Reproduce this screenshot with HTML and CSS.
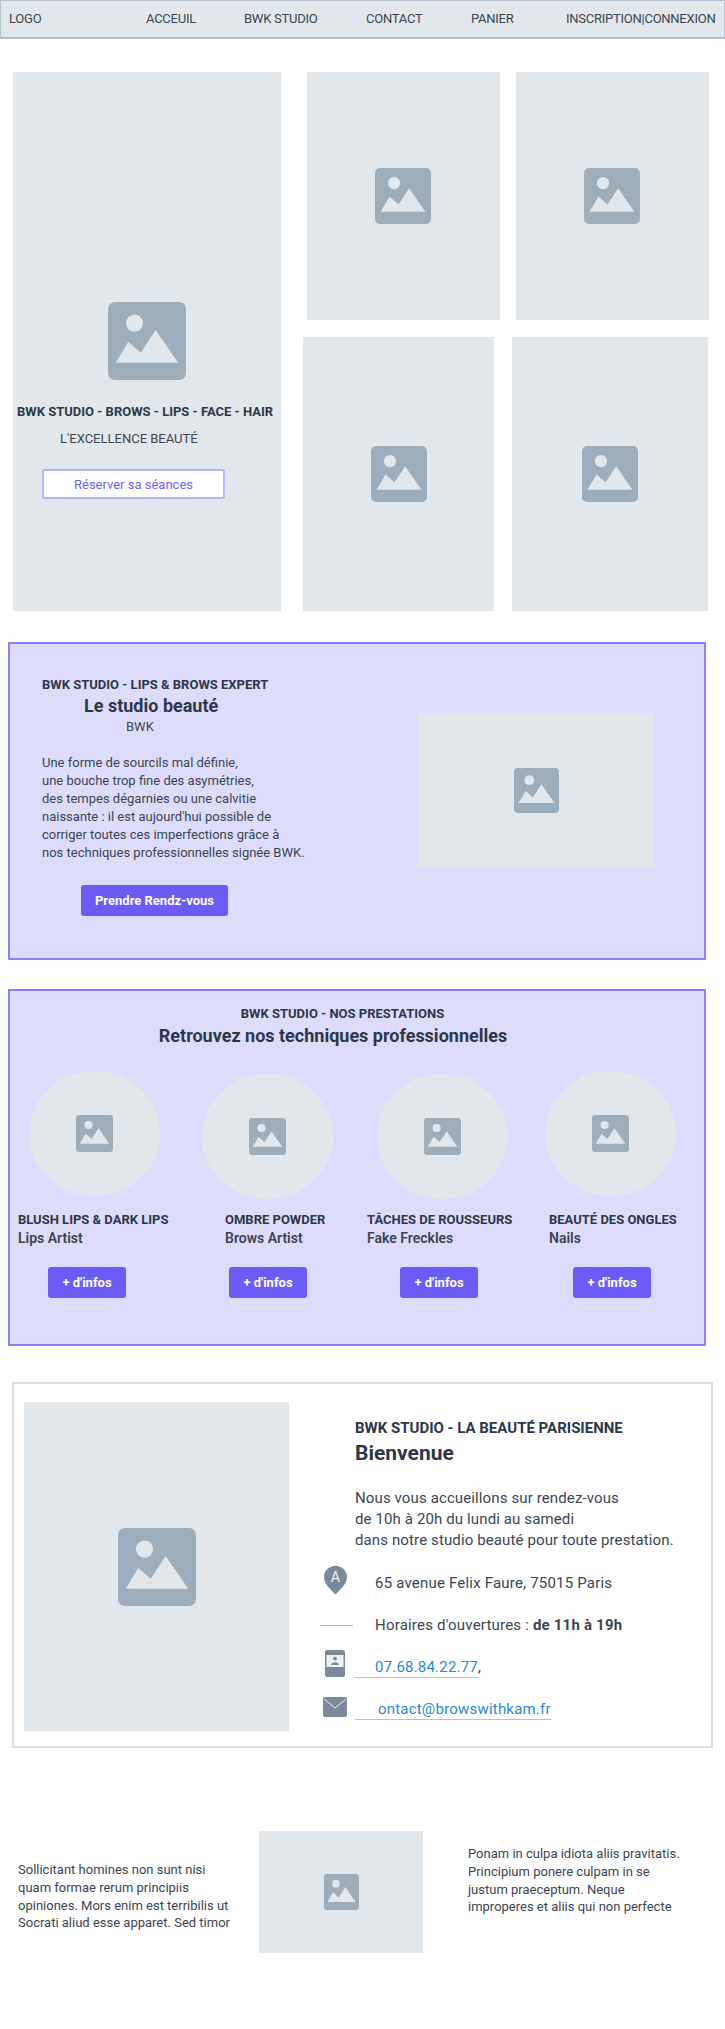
FILE: index.html
```html
<!DOCTYPE html>
<html lang="fr">

<head>
    <meta charset="UTF-8">
    <meta name="viewport" content="width=device-width, initial-scale=1.0">
    <link rel="stylesheet" href="styles.css">
    <title>BWK Studio</title>
</head>

<body>
    <svg class="sprite" aria-hidden="true">
        <symbol id="picture" viewBox="0 0 100 100" preserveAspectRatio="none">
            <rect width="100" height="100" rx="9" fill="#9eadba"></rect>
            <ellipse cx="34" cy="27" rx="11" ry="11" fill="#e2e7eb"></ellipse>
            <path d="M10 78 L26 51 L42 65 L61 36 L90 78 Z" fill="#e2e7eb"></path>
        </symbol>
    </svg>

    <nav class="nav">
        <a href="#">LOGO</a>
        <a href="#">ACCEUIL</a>
        <a href="#">BWK STUDIO</a>
        <a href="#">CONTACT</a>
        <a href="#">PANIER</a>
        <a href="#">INSCRIPTION|CONNEXION</a>
    </nav>

    <section class="hero">
        <div class="hero-main">
            <svg class="pic pic-hero"><use href="#picture"></use></svg>
            <h2 class="hero-title">BWK STUDIO - BROWS - LIPS - FACE - HAIR</h2>
            <p class="hero-sub">L'EXCELLENCE BEAUTÉ</p>
            <a class="btn-outline" href="#">Réserver sa séances</a>
        </div>
        <div class="hero-side">
            <div class="hero-row hero-row-top">
                <div class="tile"><svg class="pic pic-tile"><use href="#picture"></use></svg></div>
                <div class="tile"><svg class="pic pic-tile"><use href="#picture"></use></svg></div>
            </div>
            <div class="hero-row hero-row-bottom">
                <div class="tile tile-a"><svg class="pic pic-tile"><use href="#picture"></use></svg></div>
                <div class="tile tile-b"><svg class="pic pic-tile"><use href="#picture"></use></svg></div>
            </div>
        </div>
    </section>

    <section class="panel expert">
        <div class="expert-text">
            <h3 class="label">BWK STUDIO - LIPS &amp; BROWS EXPERT</h3>
            <h2 class="expert-title">Le studio beauté</h2>
            <p class="expert-sub">BWK</p>
            <p class="expert-body">Une forme de sourcils mal définie,<br>une bouche trop fine des asymétries,<br>des tempes dégarnies ou une calvitie<br>naissante : il est aujourd'hui possible de<br>corriger toutes ces imperfections grâce à<br>nos techniques professionnelles signée BWK.</p>
            <a class="btn btn-wide" href="#">Prendre Rendz-vous</a>
        </div>
        <div class="expert-img"><svg class="pic pic-mid"><use href="#picture"></use></svg></div>
    </section>

    <section class="panel services">
        <h3 class="label services-label">BWK STUDIO - NOS PRESTATIONS</h3>
        <h2 class="services-title">Retrouvez nos techniques professionnelles</h2>
        <div class="cards">
            <div class="card card-1">
                <div class="circle-slot"><div class="circle"><svg class="pic pic-small"><use href="#picture"></use></svg></div></div>
                <h4 class="card-name">BLUSH LIPS &amp; DARK LIPS</h4>
                <p class="card-sub">Lips Artist</p>
                <a class="btn" href="#">+ d'infos</a>
            </div>
            <div class="card card-2">
                <div class="circle-slot"><div class="circle"><svg class="pic pic-small"><use href="#picture"></use></svg></div></div>
                <h4 class="card-name">OMBRE POWDER</h4>
                <p class="card-sub">Brows Artist</p>
                <a class="btn" href="#">+ d'infos</a>
            </div>
            <div class="card card-3">
                <div class="circle-slot"><div class="circle"><svg class="pic pic-small"><use href="#picture"></use></svg></div></div>
                <h4 class="card-name">TÂCHES DE ROUSSEURS</h4>
                <p class="card-sub">Fake Freckles</p>
                <a class="btn" href="#">+ d'infos</a>
            </div>
            <div class="card card-4">
                <div class="circle-slot"><div class="circle"><svg class="pic pic-small"><use href="#picture"></use></svg></div></div>
                <h4 class="card-name">BEAUTÉ DES ONGLES</h4>
                <p class="card-sub">Nails</p>
                <a class="btn" href="#">+ d'infos</a>
            </div>
        </div>
    </section>

    <section class="welcome">
        <div class="welcome-img"><svg class="pic pic-hero"><use href="#picture"></use></svg></div>
        <div class="welcome-info">
            <h3 class="welcome-label">BWK STUDIO - LA BEAUTÉ PARISIENNE</h3>
            <h2 class="welcome-title">Bienvenue</h2>
            <p class="welcome-body">Nous vous accueillons sur rendez-vous<br>de 10h à 20h du lundi au samedi<br>dans notre studio beauté pour toute prestation.</p>
            <div class="contact">
                <svg class="icon-pin" viewBox="0 0 24 30">
                    <path d="M12 0 C5.4 0 0 5.2 0 11.8 C0 19 7.5 25.5 12 30 C16.5 25.5 24 19 24 11.8 C24 5.2 18.6 0 12 0 Z" fill="#7a8a9b"></path>
                    <text x="12" y="17" text-anchor="middle" class="pin-letter">A</text>
                </svg>
                <span>65 avenue Felix Faure, 75015 Paris</span>
            </div>
            <div class="contact">
                <span class="icon-line"></span>
                <span>Horaires d'ouvertures : <strong>de 11h à 19h</strong></span>
            </div>
            <div class="contact">
                <svg class="icon-phone" viewBox="0 0 20 27">
                    <rect width="20" height="27" rx="2.5" fill="#7a8a9b"></rect>
                    <rect x="1.5" y="5" width="17" height="12" fill="#eef1f4"></rect>
                    <circle cx="10" cy="8.6" r="1.9" fill="#7a8a9b"></circle>
                    <path d="M6 15 C6 11.2 14 11.2 14 15 Z" fill="#7a8a9b"></path>
                </svg>
                <span><a class="link link-phone" href="#">07.68.84.22.77</a>,</span>
            </div>
            <div class="contact">
                <svg class="icon-mail" viewBox="0 0 24 20">
                    <rect width="24" height="20" rx="2" fill="#7a8a9b"></rect>
                    <path d="M1.5 2.5 L12 11 L22.5 2.5" fill="none" stroke="#eef1f4" stroke-width="1"></path>
                </svg>
                <span><a class="link link-mail" href="#">ontact@browswithkam.fr</a></span>
            </div>
        </div>
    </section>

    <footer class="bottom">
        <p class="bottom-left">Sollicitant homines non sunt nisi<br>quam formae rerum principiis<br>opiniones. Mors enim est terribilis ut<br>Socrati aliud esse apparet. Sed timor</p>
        <div class="bottom-img"><svg class="pic pic-foot"><use href="#picture"></use></svg></div>
        <p class="bottom-right">Ponam in culpa idiota aliis pravitatis.<br>Principium ponere culpam in se<br>justum praeceptum. Neque<br>improperes et aliis qui non perfecte</p>
    </footer>
</body>

</html>
```

FILE: styles.css
```css
* {
    box-sizing: border-box;
}

body {
    font-family: 'Roboto', 'Liberation Sans', sans-serif;
    font-size: 13px;
    line-height: 18px;
    color: #3a4553;
    background-color: #fff;
    margin: 0;
    height: 2029px;
    overflow: hidden;
}

h2,
h3,
h4,
p {
    margin: 0;
    color: #3a4553;
}

h2,
h3,
h4 {
    color: #2d3748;
}

a {
    color: inherit;
    text-decoration: none;
}

.sprite {
    display: none;
}

.pic {
    display: block;
    flex: none;
}

.pic-hero {
    width: 78px;
    height: 78px;
}

.pic-tile {
    width: 56px;
    height: 56px;
}

.pic-mid {
    width: 45px;
    height: 45px;
}

.pic-small {
    width: 37px;
    height: 37px;
}

.pic-foot {
    width: 35px;
    height: 36px;
}

.nav {
    display: grid;
    grid-template-columns: 137px 98px 122px 105px 95px auto;
    align-items: center;
    height: 39px;
    padding-left: 8px;
    background-color: #e2e7eb;
    border: 1px solid #b4c2d0;
    border-bottom: 2px solid #aebccb;
    letter-spacing: -0.25px;
    white-space: nowrap;
}

.hero {
    display: flex;
    margin-top: 33px;
    padding-left: 13px;
}

.hero-main {
    display: flex;
    flex-direction: column;
    align-items: flex-start;
    width: 268px;
    height: 539px;
    padding-top: 230px;
    background-color: #e2e7eb;
}

.hero-main .pic {
    margin-left: 95px;
}

.hero-title {
    margin: 23px 0 0 4px;
    font-size: 13px;
    font-weight: 700;
    white-space: nowrap;
}

.hero-sub {
    margin: 9px 0 0 47px;
}

.btn-outline {
    width: 183px;
    height: 30px;
    margin: 21px 0 0 29px;
    color: #6c63ff;
    line-height: 28px;
    text-align: center;
    background-color: #fff;
    border: 2px solid #b9b5f6;
    border-radius: 2px;
}

.hero-side {
    display: flex;
    flex-direction: column;
    gap: 17px;
    width: 406px;
    margin-left: 22px;
}

.hero-row {
    display: flex;
}

.hero-row-top {
    gap: 16px;
    height: 248px;
    padding-left: 3.5px;
}

.hero-row-bottom {
    gap: 18px;
    height: 274px;
}

.tile {
    display: flex;
    align-items: center;
    justify-content: center;
    width: 193px;
    background-color: #e2e7eb;
}

.tile-a {
    width: 191px;
}

.tile-b {
    width: 196px;
}

.panel {
    width: 698px;
    margin-left: 8px;
    background-color: #dedcfd;
    border: 2px solid #8b80f9;
}

.label {
    font-size: 13px;
    font-weight: 700;
}

.btn {
    display: block;
    width: 78px;
    height: 31px;
    color: #fff;
    font-weight: 700;
    line-height: 31px;
    text-align: center;
    background-color: #6c5cf7;
    border-radius: 3px;
}

.btn-wide {
    width: 147px;
    margin: 23px 0 0 39px;
}

.expert {
    display: flex;
    height: 318px;
    margin-top: 31px;
}

.expert-text {
    width: 408px;
    padding: 32px 0 0 32px;
}

.expert-title {
    margin: 0 0 0 42px;
    font-size: 18px;
    font-weight: 700;
    line-height: 24px;
}

.expert-sub {
    margin-left: 84px;
}

.expert-body {
    margin-top: 18px;
}

.expert-img {
    display: flex;
    align-items: center;
    justify-content: center;
    width: 236px;
    height: 154px;
    margin-top: 69px;
    background-color: #e2e7eb;
}

.services {
    height: 357px;
    margin-top: 29px;
    padding-top: 14px;
}

.services-label {
    padding-right: 29px;
    text-align: center;
}

.services-title {
    margin-top: 1px;
    padding-right: 48px;
    font-size: 18px;
    font-weight: 700;
    line-height: 24px;
    text-align: center;
}

.cards {
    display: grid;
    grid-template-columns: 184px 165px 178px auto;
    margin-top: 23px;
    padding-left: 8px;
}

.circle-slot {
    height: 140px;
}

.circle {
    display: flex;
    align-items: center;
    justify-content: center;
    width: 131px;
    height: 125px;
    background-color: #e2e7eb;
    border-radius: 50%;
}

.card-name {
    font-size: 13px;
    font-weight: 700;
    white-space: nowrap;
}

.card-sub {
    font-size: 14px;
    font-weight: 600;
}

.card .btn {
    margin-top: 20px;
}

.card-2 .circle-slot,
.card-3 .circle-slot {
    padding-top: 3px;
}

.card-1 .circle {
    margin-left: 11px;
}

.card-1 .btn {
    margin-left: 30px;
}

.card-2 .card-name,
.card-2 .card-sub {
    margin-left: 23px;
}

.card-2 .btn {
    margin-left: 27px;
}

.card-3 .circle {
    margin-left: 10px;
}

.card-3 .btn {
    margin-left: 33px;
}

.card-4 .card-name,
.card-4 .card-sub {
    margin-left: 4px;
}

.card-4 .btn {
    margin-left: 28px;
}

.welcome {
    display: flex;
    width: 701px;
    height: 366px;
    margin: 36px 0 0 12px;
    padding: 18px 0 0 10px;
    border: 2px solid #d5dfe9;
}

.welcome-img {
    display: flex;
    align-items: center;
    justify-content: center;
    width: 265px;
    height: 329px;
    background-color: #e2e7eb;
}

.welcome-info {
    margin: 16px 0 0 31px;
    font-size: 15px;
    line-height: 21px;
    letter-spacing: 0.2px;
}

.welcome-label,
.welcome-title,
.welcome-body {
    margin-left: 35px;
}

.welcome-label {
    font-size: 15px;
    font-weight: 700;
    line-height: 20px;
    letter-spacing: 0;
}

.welcome-title {
    margin-top: 2px;
    font-size: 21px;
    font-weight: 700;
    line-height: 26px;
    letter-spacing: 0;
}

.welcome-body {
    margin-top: 22px;
    margin-bottom: 11px;
    letter-spacing: 0.12px;
}

.contact {
    display: grid;
    grid-template-columns: 33px auto;
    column-gap: 22px;
    align-items: center;
    height: 42px;
}

.contact svg,
.icon-line {
    justify-self: center;
}

.contact > span:last-child {
    white-space: nowrap;
}

.icon-pin {
    width: 23px;
    height: 30px;
    margin: -6px 0 0 -2px;
}

.pin-letter {
    fill: #eef1f4;
    font-size: 15px;
}

.icon-line {
    display: block;
    width: 33px;
    height: 1px;
    background-color: #a9bdd1;
}

.icon-phone {
    width: 20px;
    height: 27px;
    margin: -7px 0 0 -4px;
}

.icon-mail {
    width: 24px;
    height: 20px;
    margin: -4px 0 0 -3px;
}

.link {
    display: inline-block;
    margin-left: -20px;
    color: #2b88d8;
    line-height: 20px;
    border-bottom: 1px solid #90cdf4;
}

.link-phone {
    padding-left: 20px;
}

.link-mail {
    padding-left: 23px;
}

.bottom {
    display: flex;
    align-items: flex-start;
    margin-top: 83px;
    padding-left: 18px;
    line-height: 17.75px;
}

.bottom-left {
    width: 241px;
    margin-top: 30px;
}

.bottom-img {
    display: flex;
    align-items: center;
    justify-content: center;
    width: 164px;
    height: 122px;
    background-color: #e2e7eb;
}

.bottom-right {
    margin: 14px 0 0 45px;
    white-space: nowrap;
}
```
